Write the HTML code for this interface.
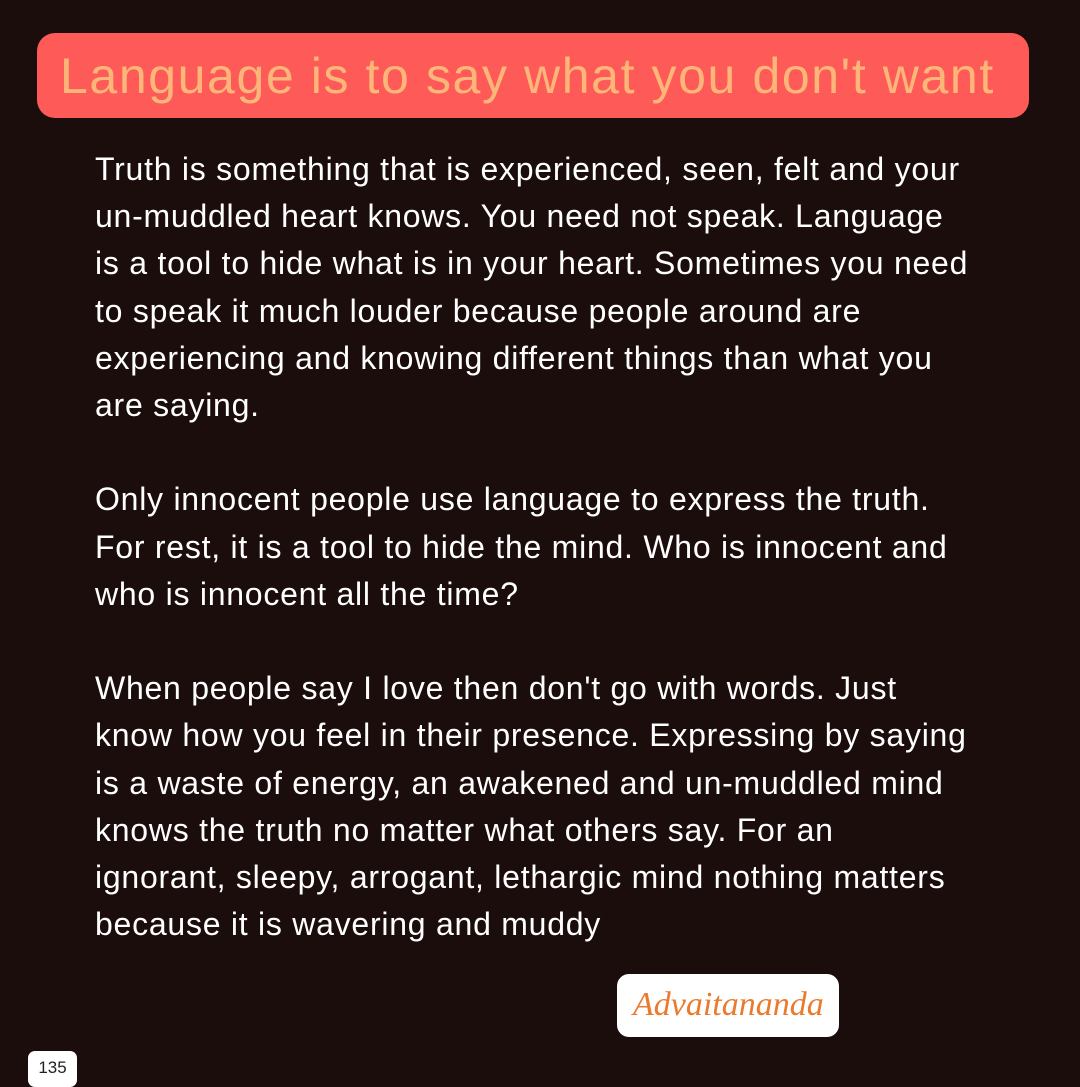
<!DOCTYPE html>
<html><head><meta charset="utf-8"><style>
html,body{margin:0;padding:0;}
body{width:1080px;height:1080px;background:#1b0d0b;position:relative;overflow:hidden;font-family:"Liberation Sans",sans-serif;}
.hdr{position:absolute;left:37px;top:33px;width:992px;height:85px;background:#fd5a58;border-radius:18px;}
.hdr span{position:absolute;left:23px;top:14px;font-size:50px;color:#fdb679;white-space:nowrap;letter-spacing:1.6px;}
.body{position:absolute;left:95px;top:146px;color:#fff;font-size:32px;line-height:47.2px;white-space:nowrap;letter-spacing:0.75px;}
.sig{position:absolute;left:617px;top:974px;width:222px;height:63px;background:#fff;border-radius:12px;}
.sig span{position:absolute;left:16px;top:12px;font-family:"Liberation Serif",serif;font-style:italic;font-size:34px;color:#ec7a2c;}
.pg{position:absolute;left:28px;top:1051px;width:49px;height:36px;background:#fff;border-radius:7px;font-size:17px;color:#222;text-align:center;line-height:34px;}
</style></head><body>
<div class="hdr"><span>Language is to say what you don't want</span></div>
<div class="body">Truth is something that is experienced, seen, felt and your<br>un-muddled heart knows. You need not speak. Language<br>is a tool to hide what is in your heart. Sometimes you need<br>to speak it much louder because people around are<br>experiencing and knowing different things than what you<br>are saying.<br><br>Only innocent people use language to express the truth.<br>For rest, it is a tool to hide the mind. Who is innocent and<br>who is innocent all the time?<br><br>When people say I love then don't go with words. Just<br>know how you feel in their presence. Expressing by saying<br>is a waste of energy, an awakened and un-muddled mind<br>knows the truth no matter what others say. For an<br>ignorant, sleepy, arrogant, lethargic mind nothing matters<br>because it is wavering and muddy</div>
<div class="sig"><span>Advaitananda</span></div>
<div class="pg">135</div>
</body></html>
